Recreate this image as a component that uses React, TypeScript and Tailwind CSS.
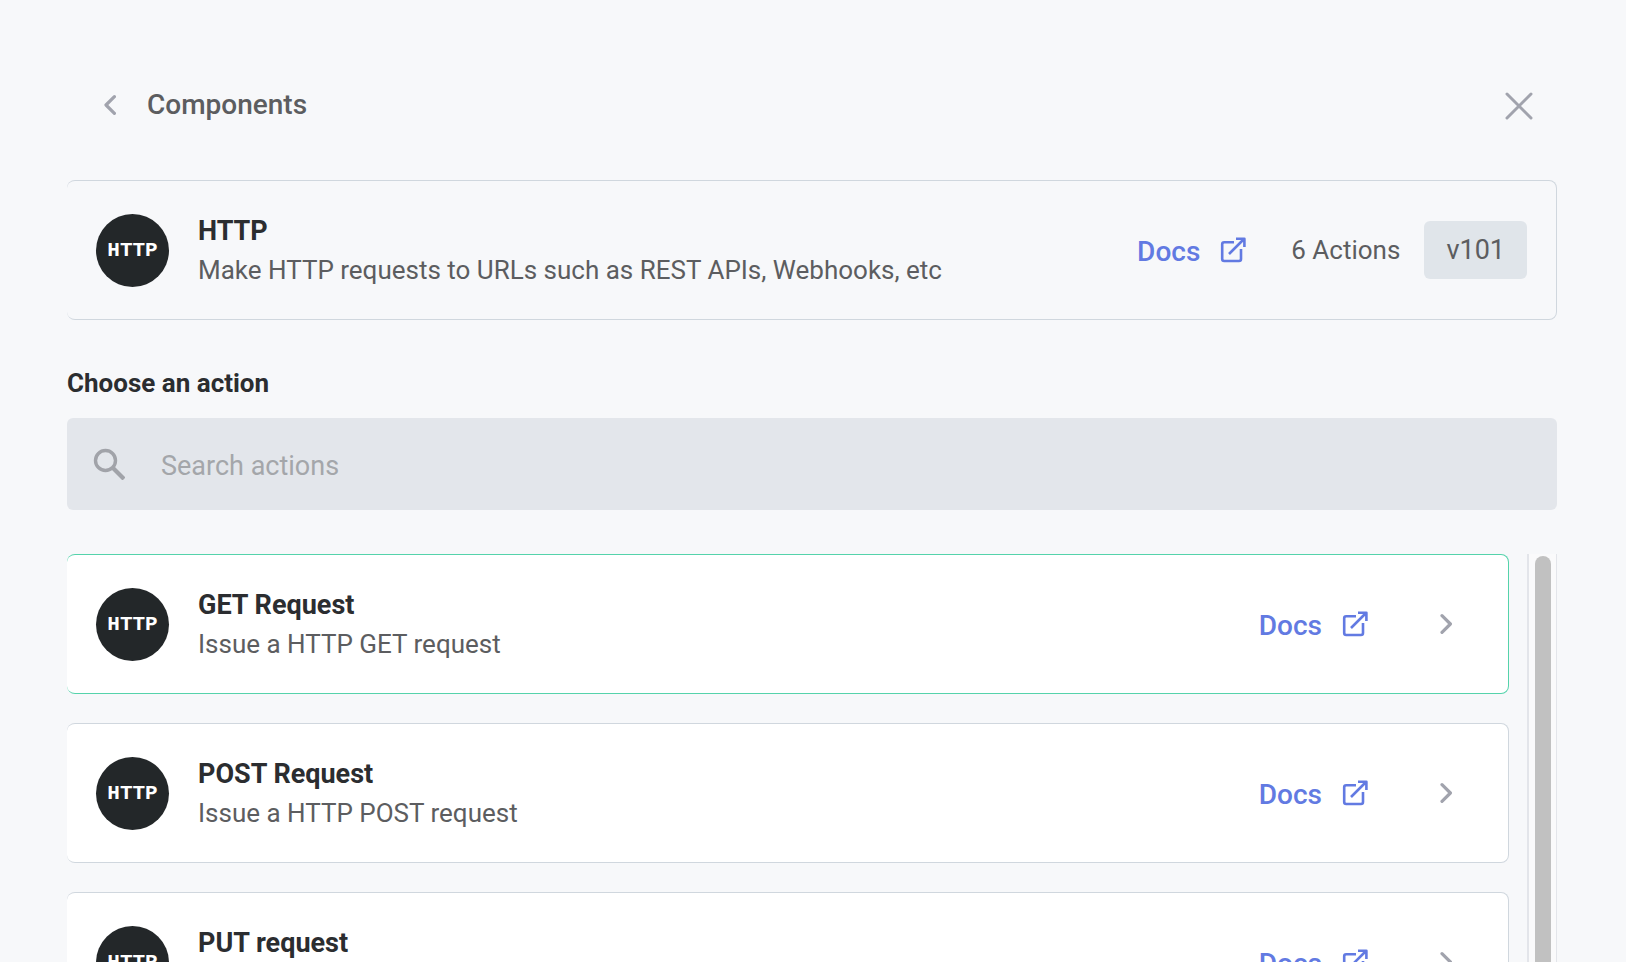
import React from "react";

type Action = { title: string; description: string; selected?: boolean };

const actions: Action[] = [
  { title: "GET Request", description: "Issue a HTTP GET request", selected: true },
  { title: "POST Request", description: "Issue a HTTP POST request" },
  { title: "PUT request", description: "Issue a HTTP PUT request" },
];

function Chevron({ direction }: { direction: "left" | "right" }) {
  return (
    <svg width="12" height="20" viewBox="0 0 12 20" fill="none" stroke="#a1a3ad" strokeWidth="3.2" strokeLinecap="round" strokeLinejoin="round" aria-hidden="true">
      <path d={direction === "left" ? "M10.4 1.7L2 10L10.4 18.3" : "M2 1.7L10.4 10L2 18.3"} />
    </svg>
  );
}

function HttpBadge() {
  return (
    <div className="flex size-[73px] shrink-0 items-center justify-center rounded-full bg-[#232729] pt-[2px] font-['Liberation_Mono',monospace] text-[21px] leading-6 font-bold text-white">
      HTTP
    </div>
  );
}

function DocsLink() {
  return (
    <a href="#docs" className="flex items-center gap-5 text-[#627ae2]">
      <span className="pt-1 text-[28px] leading-8 font-medium">Docs</span>
      <svg width="26" height="26" viewBox="0 0 26 26" fill="none" stroke="currentColor" strokeWidth="2.6" strokeLinejoin="round" aria-hidden="true">
        <path d="M14 5.2H4.2Q2.2 5.2 2.2 7.2V22Q2.2 24 4.2 24H19Q21 24 21 22V12" />
        <path d="M9 17L24 2M16 1.8H24.4V10" />
      </svg>
    </a>
  );
}

function Heading({ title, description }: { title: string; description: string }) {
  return (
    <div className="min-w-0 flex-1 pt-px">
      <h2 className="text-[27px] leading-[39px] font-bold text-[#2b2d30]">{title}</h2>
      <p className="text-[26px] leading-[39px] text-[#5c5d60]">{description}</p>
    </div>
  );
}

export default function App() {
  return (
    <main className="flex h-screen flex-col overflow-hidden bg-[#f7f8fa] pr-[69px] pl-[67px] font-['Roboto',sans-serif]">
      <header className="flex shrink-0 items-center justify-between pt-[84px] pr-6 pl-[37px]">
        <button type="button" className="flex items-center gap-[31px] text-[28px] leading-[42px] font-medium text-[#5c5d60]">
          <Chevron direction="left" />
          Components
        </button>
        <button type="button" aria-label="Close" className="pt-[2px]">
          <svg width="28" height="28" viewBox="0 0 28 28" fill="none" stroke="#a1a3ad" strokeWidth="3" strokeLinecap="round" aria-hidden="true">
            <path d="M2 2L26 26M26 2L2 26" />
          </svg>
        </button>
      </header>

      <section className="mt-[54px] flex h-[140px] shrink-0 items-center gap-[29px] rounded-lg border border-l-0 border-[#d0d7de] pr-[29px] pl-[29px]">
        <HttpBadge />
        <Heading title="HTTP" description="Make HTTP requests to URLs such as REST APIs, Webhooks, etc" />
        <div className="flex items-center">
          <DocsLink />
          <span className="ml-[45px] text-[26px] leading-8 text-[#5c5d60]">6 Actions</span>
          <span className="ml-6 rounded-md bg-[#e0e5ea] px-[22px] py-[13px] text-[27px] leading-8 text-[#5c5d60]">v101</span>
        </div>
      </section>

      <label htmlFor="search" className="mt-[43px] shrink-0 text-[26px] leading-10 font-bold text-[#2b2d30]">
        Choose an action
      </label>
      <div className="mt-[15px] flex h-[92px] shrink-0 items-center gap-9 rounded-md bg-[#e3e6eb] px-[26px]">
        <svg width="32" height="32" viewBox="0 0 32 32" fill="none" stroke="#a1a3a9" strokeWidth="3.4" aria-hidden="true">
          <circle cx="12.5" cy="12.5" r="10" />
          <path d="M19.5 19.5L31 31" strokeWidth="4.2" />
        </svg>
        <input id="search" type="text" placeholder="Search actions" className="min-w-0 flex-1 bg-transparent pt-1 text-[27px] leading-8 text-[#5c5d60] outline-none placeholder:text-[#a4a6aa]" />
      </div>

      <div className="mt-11 flex min-h-0 flex-1 gap-[18px]">
        <ul className="flex min-w-0 flex-1 flex-col gap-[29px] overflow-hidden">
          {actions.map((action) => (
            <li
              key={action.title}
              className={`flex h-[140px] shrink-0 items-center gap-[29px] rounded-lg border border-l-0 bg-white pr-14 pl-[29px] ${action.selected ? "border-[#55d3ab]" : "border-[#d0d7de]"}`}
            >
              <HttpBadge />
              <Heading title={action.title} description={action.description} />
              <div className="flex items-center gap-[72px]">
                <DocsLink />
                <button type="button" aria-label={`Open ${action.title}`}>
                  <Chevron direction="right" />
                </button>
              </div>
            </li>
          ))}
        </ul>
        <div className="flex w-[30px] shrink-0 justify-center overflow-hidden border-r border-l-2 border-[#e3e5ea] bg-[#fafafb] pt-[2px]">
          <div className="h-[600px] w-4 rounded-full bg-[#c1c1c1]" />
        </div>
      </div>
    </main>
  );
}
